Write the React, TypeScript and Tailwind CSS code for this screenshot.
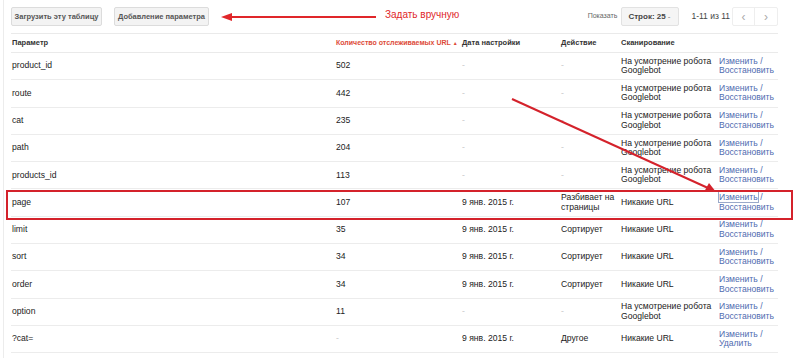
import React from "react";

type Row = {
  name: string;
  count: string;
  date: string;
  action: string;
  scan: string;
  last: string;
  focused?: boolean;
};

const robot = "На усмотрение робота Googlebot";
const none = "Никакие URL";
const date = "9 янв. 2015 г.";

const rows: Row[] = [
  { name: "product_id", count: "502", date: "-", action: "-", scan: robot, last: "Восстановить" },
  { name: "route", count: "442", date: "-", action: "-", scan: robot, last: "Восстановить" },
  { name: "cat", count: "235", date: "-", action: "-", scan: robot, last: "Восстановить" },
  { name: "path", count: "204", date: "-", action: "-", scan: robot, last: "Восстановить" },
  { name: "products_id", count: "113", date: "-", action: "-", scan: robot, last: "Восстановить" },
  { name: "page", count: "107", date, action: "Разбивает на страницы", scan: none, last: "Восстановить", focused: true },
  { name: "limit", count: "35", date, action: "Сортирует", scan: none, last: "Восстановить" },
  { name: "sort", count: "34", date, action: "Сортирует", scan: none, last: "Восстановить" },
  { name: "order", count: "34", date, action: "Сортирует", scan: none, last: "Восстановить" },
  { name: "option", count: "11", date: "-", action: "-", scan: robot, last: "Восстановить" },
  { name: "?cat=", count: "-", date, action: "Другое", scan: none, last: "Удалить" },
];

const cols = "grid grid-cols-[324px_126px_99px_60px_98px_60px]";

function Cell({ value, className = "" }: { value: string; className?: string }) {
  if (value === "-") {
    return <div className={`text-[#c8c8c8] ${className}`}>-</div>;
  }
  return <div className={className}>{value}</div>;
}

export default function App() {
  return (
    <div className="relative h-[358px] w-[800px] overflow-hidden bg-white font-['Liberation_Sans',Arial,sans-serif] text-[#222]">
      <div className="absolute left-[3px] top-0 h-full w-px bg-[#ececec]" />

      <div className="ml-[11px] w-[767px]">
        {/* toolbar */}
        <div className="flex h-[33px] items-start pt-[7px]">
          <button className="h-[19px] w-[91px] rounded-[2px] border border-[#dcdcdc] bg-[#f3f3f3] text-[7.5px] font-bold text-[#555]">
            Загрузить эту таблицу
          </button>
          <button className="ml-[12px] h-[19px] w-[95px] rounded-[2px] border border-[#dcdcdc] bg-[#f3f3f3] text-[7.5px] font-bold text-[#555]">
            Добавление параметра
          </button>
          <div className="ml-[176px] text-[10px] text-[#e0262a]">Задать вручную</div>
          <div className="ml-auto flex items-center">
            <span className="mr-[4px] text-[7px] text-[#666]">Показать</span>
            <div className="flex h-[19px] w-[58px] items-center justify-between rounded-[2px] border border-[#e2e2e2] bg-[#f5f5f5] pl-[6px] pr-[8px] text-[8px] font-bold text-[#444]">
              <span>Строк: 25</span>
              <span className="text-[8px] font-normal text-[#777]">-</span>
            </div>
            <span className="ml-[12px] text-[8.5px] text-[#444]">1-11 из 11</span>
            <div className="ml-[2px] flex h-[19px] rounded-[2px] border border-[#eee]">
              <div className="flex w-[22px] items-center justify-center border-r border-[#eee] text-[12px] text-[#aaa]">‹</div>
              <div className="flex w-[22px] items-center justify-center text-[12px] text-[#aaa]">›</div>
            </div>
          </div>
        </div>

        {/* header */}
        <div className={`${cols} h-[20px] items-center whitespace-nowrap border-y border-[#eaeaea] pl-px text-[7.5px] font-bold text-[#333]`}>
          <div>Параметр</div>
          <div className="text-[7px] text-[#dd4b39]">
            Количество отслеживаемых URL<span className="ml-[2px] text-[5px]">▲</span>
          </div>
          <div>Дата настройки</div>
          <div>Действие</div>
          <div>Сканирование</div>
          <div />
        </div>

        {/* rows */}
        {rows.map((row) => (
          <div
            key={row.name}
            className={`${cols} h-[27.3px] items-center border-b border-[#ececec] pl-px text-[8.6px] leading-[9.5px]`}
          >
            <div>{row.name}</div>
            <Cell value={row.count} />
            <Cell value={row.date} />
            <Cell value={row.action} className="pr-1" />
            <Cell value={row.scan} className="pr-1" />
            <div className="text-[#4f6bb0]">
              <span className={row.focused ? "outline outline-1 outline-[#9aa9c9]" : ""}>Изменить</span> /
              <br />
              {row.last}
            </div>
          </div>
        ))}
      </div>

      {/* annotations */}
      <div className="absolute left-[6px] top-[190px] h-[30px] w-[787px] border-2 border-[#d4222b]" />
      <svg className="pointer-events-none absolute left-0 top-0" width="800" height="358">
        <line x1="376" y1="17" x2="230" y2="17" stroke="#e0262a" strokeWidth="2" />
        <polygon points="221,17 232,13 232,21" fill="#e0262a" />
        <line x1="512" y1="99" x2="708" y2="188" stroke="#d4222b" strokeWidth="2" />
        <polygon points="716,192 704,192 709,183" fill="#d4222b" />
      </svg>
    </div>
  );
}
